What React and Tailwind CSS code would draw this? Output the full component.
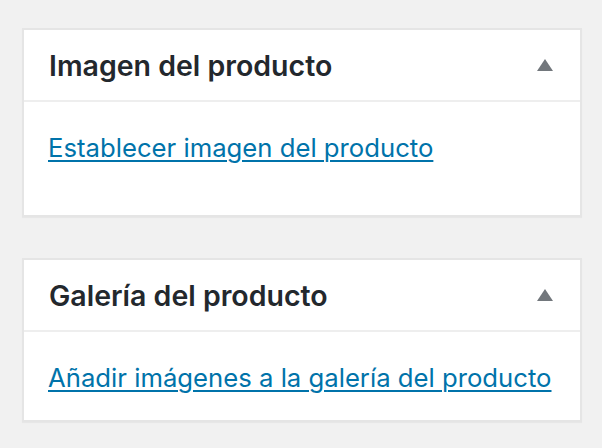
import React from 'react';

// Caja de metadatos estilo WordPress (escala 2x)
function MetaBox({ title, link, bodyClass }) {
    return (
        <div className="border-2 border-[#e5e5e5] bg-white shadow-[0_1px_1px_rgba(0,0,0,0.04)]">
            <div className="h-[72px] flex items-center justify-between pl-[25px] pr-[27px] border-b-2 border-[#eeeeee]">
                <h2 className="text-[28.5px] font-semibold text-[#23282d] leading-none pt-[3px]">{title}</h2>
                <svg width="16" height="12" viewBox="0 0 16 12">
                    <polygon points="8,0 16,12 0,12" fill="#72777c" />
                </svg>
            </div>
            <div className={bodyClass}>
                <a href="#" className="text-[25.7px] leading-[36px] text-[#0073aa] underline underline-offset-[3px] decoration-2">
                    {link}
                </a>
            </div>
        </div>
    );
}

export default function App() {
    return (
        <div className="min-h-[448px] bg-[#f1f1f1] pt-[28px] pl-[22px] pr-[20px] flex flex-col gap-[41px] font-['Inter','Liberation_Sans',sans-serif]">
            <MetaBox
                title="Imagen del producto"
                link="Establecer imagen del producto"
                bodyClass="h-[113px] pl-[24px] pt-[28px]"
            />
            <MetaBox
                title="Galería del producto"
                link="Añadir imágenes a la galería del producto"
                bodyClass="h-[88px] pl-[24px] pt-[28px]"
            />
        </div>
    );
}
